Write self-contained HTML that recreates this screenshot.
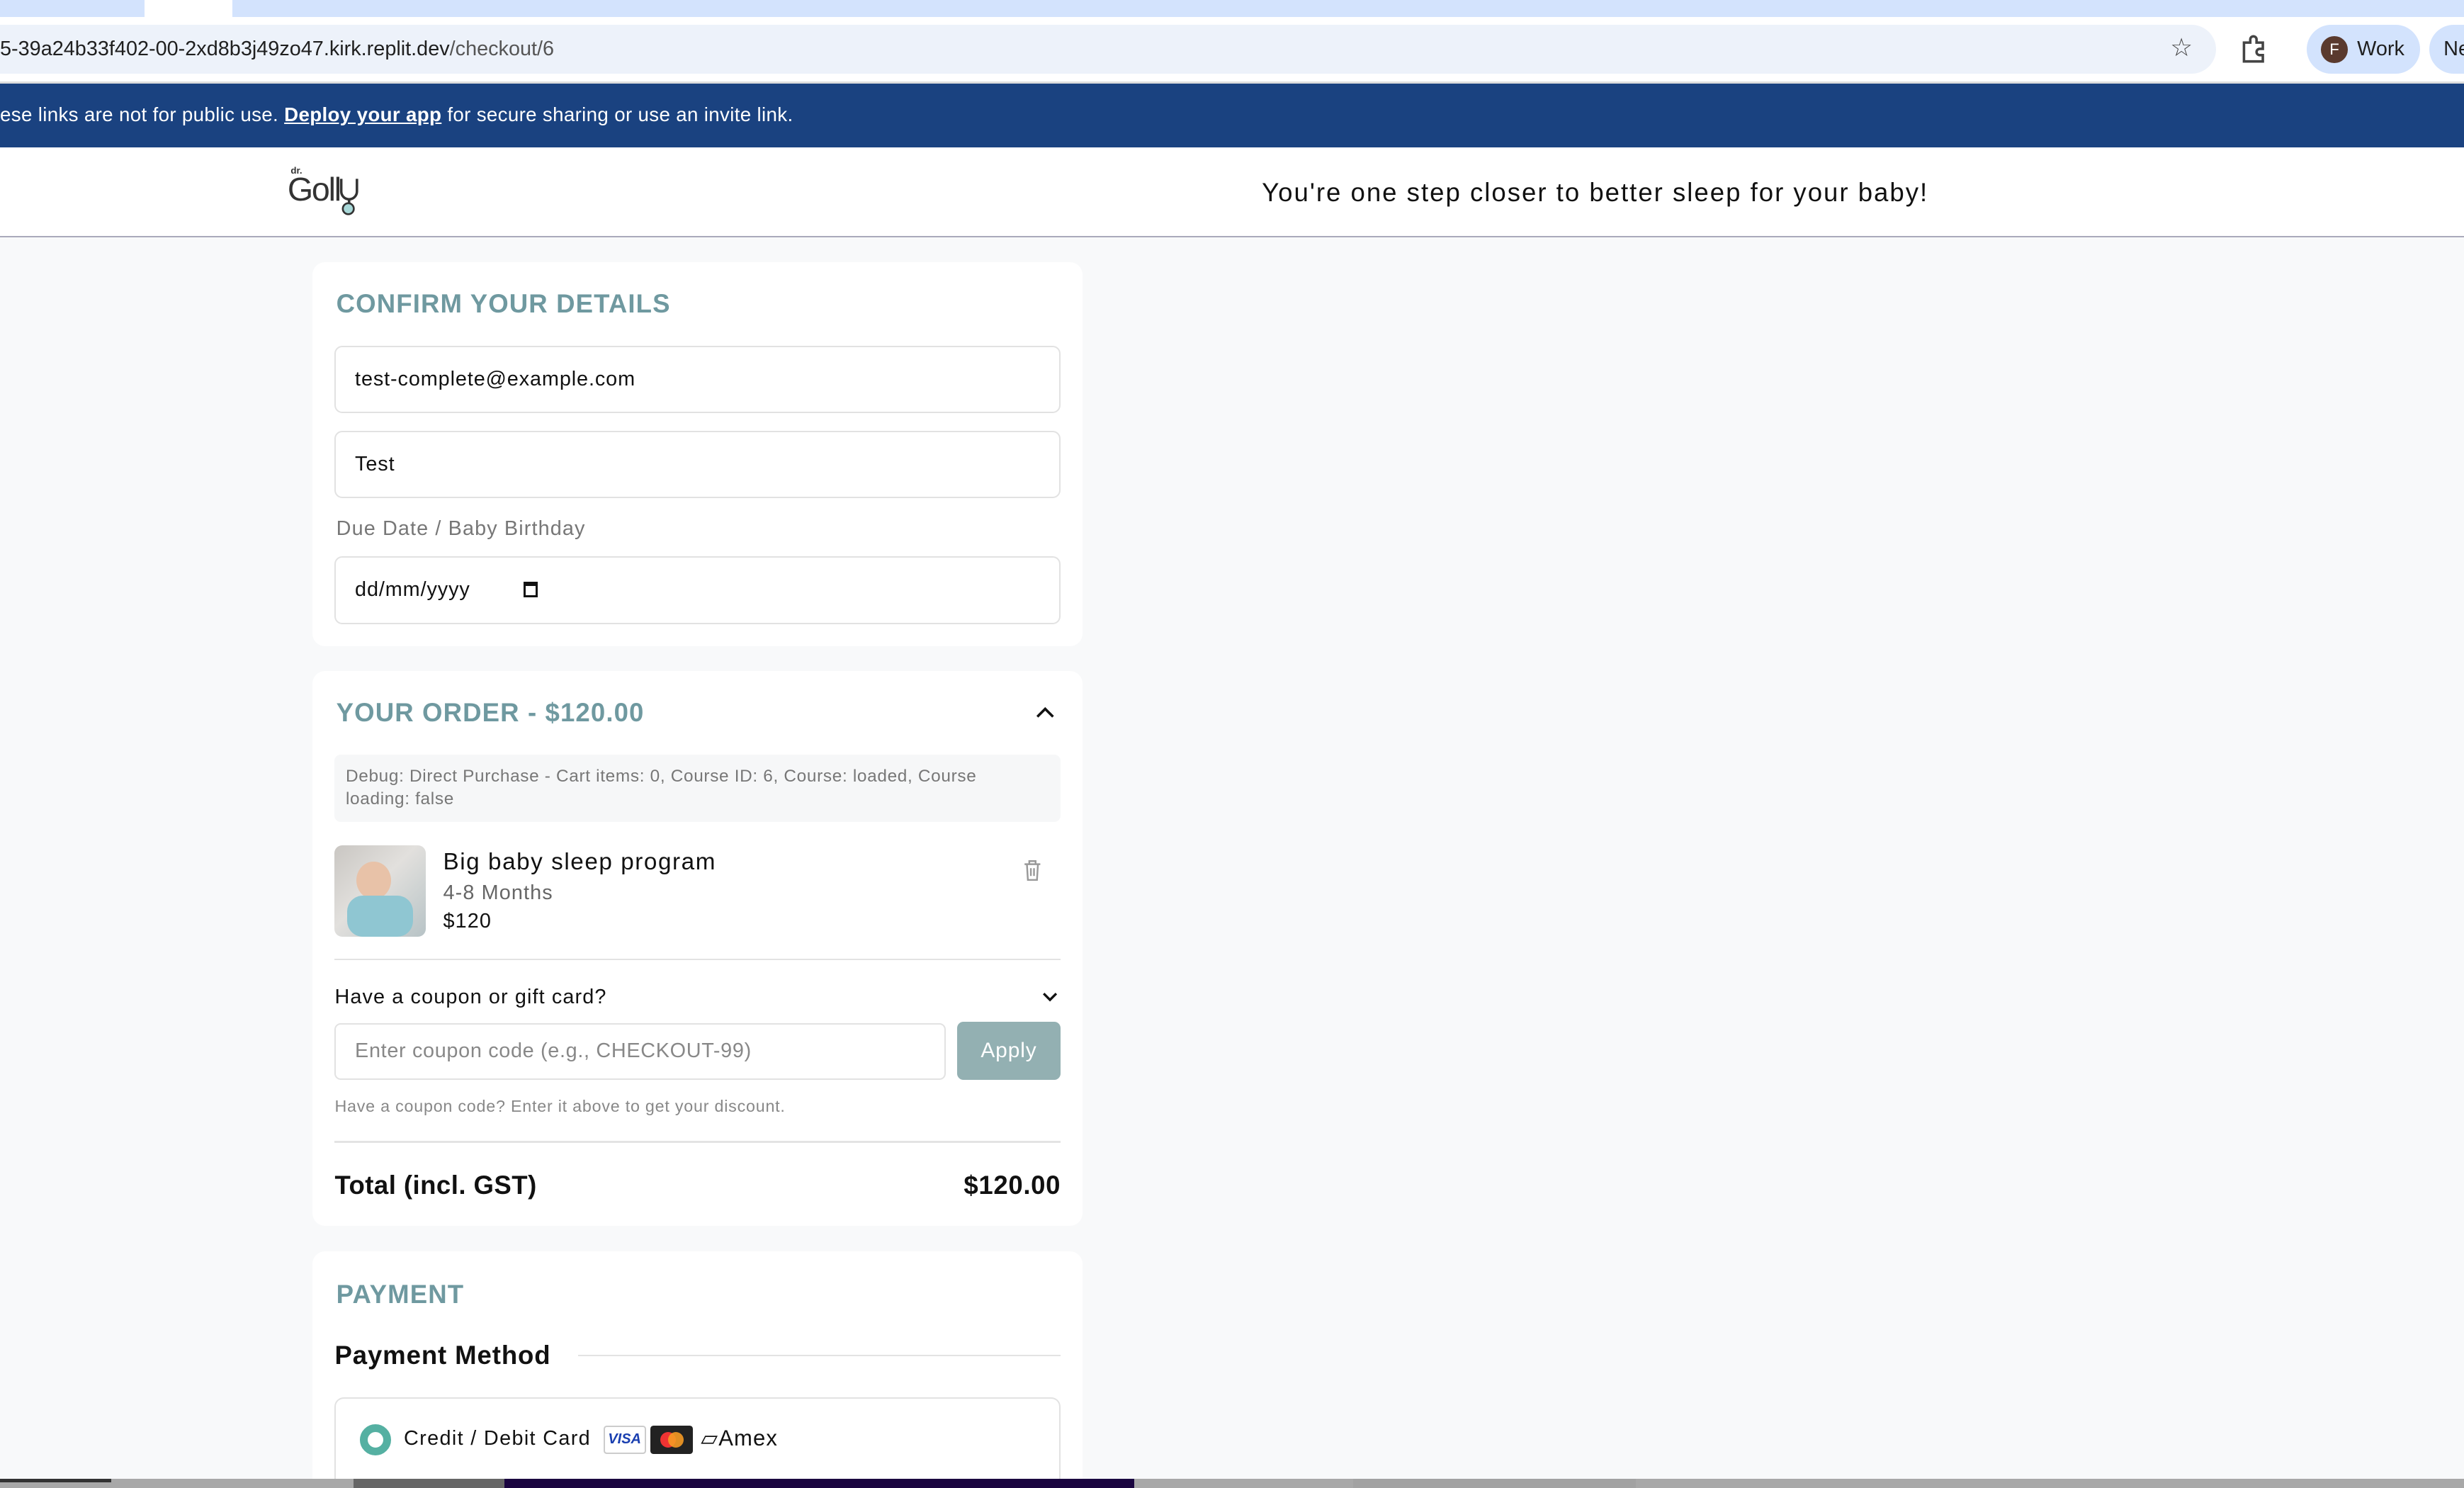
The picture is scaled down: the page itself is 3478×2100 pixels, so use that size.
<!DOCTYPE html>
<html><head><meta charset="utf-8"><style>
*{box-sizing:border-box;margin:0;padding:0}
html,body{width:3478px;height:2100px;overflow:hidden;background:#f8f9fa}
#w{zoom:2.2181;width:1568px;height:947px;overflow:hidden;position:relative;font-family:"Liberation Sans",sans-serif;color:#111}
.a{position:absolute}
.card{position:absolute;left:199px;width:490px;background:#fff;border-radius:8px}
.m{letter-spacing:.5px}
.h{position:absolute;left:15px;color:#6f99a0;font-weight:bold;font-size:16.5px;letter-spacing:.5px}
.inp{position:absolute;left:14px;width:462px;height:43px;border:1px solid #e2e2e2;border-radius:5px;font-size:13px;padding-left:12px;line-height:41px;color:#111;letter-spacing:.4px}
.line{position:absolute;left:14px;width:462px;height:1px;background:#e3e3e3}
</style></head><body><div id="w">
<div class="a" style="left:0;top:0;width:1568px;height:11px;background:#d3e3fd"></div>
<div class="a" style="left:92px;top:0;width:56px;height:11px;background:#fff"></div>
<div class="a" style="left:0;top:11px;width:1568px;height:42px;background:#fff"></div>
<div class="a" style="left:-20px;top:16px;width:1430px;height:31px;background:#edf2fa;border-radius:16px"></div>
<div class="a" style="left:0;top:24px;font-size:13px;color:#1f1f1f">5-39a24b33f402-00-2xd8b3j49zo47.kirk.replit.dev<span style="color:#555">/checkout/6</span></div>
<div class="a" style="left:1381px;top:21px;font-size:16px;color:#444">☆</div>
<svg class="a" style="left:1426px;top:22px" width="17" height="18" viewBox="0 0 17 18"><path d="M2 5h4V3a2 2 0 014 0v2h4v4h-2a2 2 0 000 4h2v4H2z" fill="none" stroke="#444" stroke-width="1.6"/></svg>
<div class="a" style="left:1468px;top:16px;width:72px;height:31px;background:#d3e3fd;border-radius:16px"></div>
<div class="a" style="left:1477px;top:23px;width:17px;height:17px;background:#5a3a2e;border-radius:50%;color:#fff;font-size:10px;text-align:center;line-height:17px">F</div>
<div class="a" style="left:1500px;top:24px;font-size:13px;color:#1f1f1f">Work</div>
<div class="a" style="left:1546px;top:16px;width:40px;height:31px;background:#d3e3fd;border-radius:16px"></div>
<div class="a" style="left:1555px;top:24px;font-size:13px;color:#1f1f1f">Ne</div>
<div class="a" style="left:0;top:52px;width:1568px;height:1px;background:#ddd"></div>
<div class="a" style="left:0;top:53px;width:1568px;height:41px;background:#1a4280"></div>
<div class="a" style="left:0;top:66px;font-size:12.5px;color:#fff;letter-spacing:.15px">ese links are not for public use. <u style="font-weight:bold">Deploy your app</u> for secure sharing or use an invite link.</div>
<div class="a" style="left:0;top:94px;width:1568px;height:57px;background:#fff;border-bottom:1px solid #aab"></div>
<div class="a" style="left:185px;top:105px;font-size:6px;color:#333;font-weight:bold">dr.</div>
<div class="a" style="left:183px;top:108px;font-size:21px;color:#333;letter-spacing:-1px">Goll</div>
<svg class="a" style="left:214px;top:112px" width="20" height="26" viewBox="0 0 20 26"><path d="M3 2v8a5 5 0 0010 0V2" fill="none" stroke="#333" stroke-width="1.6"/><path d="M8 15v4" stroke="#333" stroke-width="1.6"/><circle cx="7.5" cy="21" r="3.5" fill="#a8d8d8" stroke="#333" stroke-width="1.2"/></svg>
<div class="a" style="left:803px;top:113px;font-size:16.5px;color:#111;letter-spacing:.9px">You're one step closer to better sleep for your baby!</div>

<div class="card" style="top:167px;height:244px">
<div class="h" style="top:17px">CONFIRM YOUR DETAILS</div>
<div class="inp" style="top:53px">test-complete@example.com</div>
<div class="inp" style="top:107px">Test</div>
<div class="a m" style="left:15px;top:162px;font-size:13px;color:#777">Due Date / Baby Birthday</div>
<div class="inp" style="top:187px">dd/mm/yyyy <span style="display:inline-block;width:9px;height:10px;border:1.5px solid #111;border-top-width:3px;margin-left:30px;vertical-align:-1px"></span></div>
</div>

<div class="card" style="top:427px;height:353px">
<div class="h" style="top:17px">YOUR ORDER - $120.00</div>
<svg class="a" style="left:460px;top:22px" width="12" height="8"><path d="M1 7l5-5 5 5" fill="none" stroke="#111" stroke-width="1.6"/></svg>
<div class="a" style="left:14px;top:53px;width:462px;height:43px;background:#f6f7f8;border-radius:4px;padding:7px 50px 7px 7px;font-size:11px;color:#777;line-height:14.5px;letter-spacing:.3px">Debug: Direct Purchase - Cart items: 0, Course ID: 6, Course: loaded, Course loading: false</div>
<div class="a" style="left:14px;top:111px;width:58px;height:58px;border-radius:5px;background:linear-gradient(135deg,#c9c6c2,#e2e0dd 45%,#b7c3c6);overflow:hidden"><div style="position:absolute;left:14px;top:10px;width:22px;height:24px;border-radius:50%;background:#e8c2a8"></div><div style="position:absolute;left:8px;top:32px;width:42px;height:26px;border-radius:10px;background:#8fc6d2"></div></div>
<div class="a m" style="left:83px;top:113px;font-size:15px;color:#111;letter-spacing:.7px">Big baby sleep program</div>
<div class="a m" style="left:83px;top:134px;font-size:13px;color:#666">4-8 Months</div>
<div class="a m" style="left:83px;top:152px;font-size:13px;color:#111">$120</div>
<svg class="a" style="left:452px;top:120px" width="12" height="14"><path d="M1 3h10M4 3V1h4v2M2.5 3l.6 10h5.8l.6-10M5 5.5v5M7 5.5v5" fill="none" stroke="#999" stroke-width="1.1"/></svg>
<div class="line" style="top:183px"></div>
<div class="a m" style="left:14px;top:200px;font-size:13px;color:#111">Have a coupon or gift card?</div>
<svg class="a" style="left:464px;top:204px" width="10" height="7"><path d="M1 1l4 4 4-4" fill="none" stroke="#111" stroke-width="1.5"/></svg>
<div class="a m" style="left:14px;top:224px;width:389px;height:36px;border:1px solid #e2e2e2;border-radius:4px;padding-left:12px;line-height:34px;font-size:13px;color:#888;letter-spacing:.3px">Enter coupon code (e.g., CHECKOUT-99)</div>
<div class="a" style="left:410px;top:223px;width:66px;height:37px;background:#93b0b2;border-radius:4px;color:#fff;font-size:13.5px;text-align:center;line-height:37px;letter-spacing:.4px">Apply</div>
<div class="a" style="left:14px;top:271px;font-size:10.5px;color:#888;letter-spacing:.35px">Have a coupon code? Enter it above to get your discount.</div>
<div class="line" style="top:299px"></div>
<div class="a" style="left:14px;top:318px;font-size:16.5px;font-weight:bold;color:#111;letter-spacing:.2px">Total (incl. GST)</div>
<div class="a" style="right:14px;top:318px;font-size:16.5px;font-weight:bold;color:#111;letter-spacing:.3px">$120.00</div>
</div>

<div class="card" style="top:796px;height:200px">
<div class="h" style="top:18px">PAYMENT</div>
<div class="a" style="left:14px;top:57px;font-size:16.5px;font-weight:bold;color:#111;letter-spacing:.4px">Payment Method</div>
<div class="line" style="top:66px;left:169px;width:307px"></div>
<div class="a" style="left:14px;top:93px;width:462px;height:80px;border:1px solid #e2e2e2;border-radius:6px"></div>
<div class="a" style="left:30px;top:110px;width:20px;height:20px;border-radius:50%;border:5px solid #55b0a2;background:#fff"></div>
<div class="a" style="left:58px;top:112px;font-size:13px;color:#111;letter-spacing:.6px">Credit / Debit Card</div>
<div class="a" style="left:185px;top:111px;width:27px;height:18px;border:1px solid #ccc;border-radius:2px;font-size:9px;font-weight:bold;font-style:italic;color:#1a3fb0;text-align:center;line-height:16px">VISA</div>
<div class="a" style="left:215px;top:111px;width:27px;height:18px;background:#222;border-radius:2px"><div style="position:absolute;left:6px;top:4px;width:10px;height:10px;border-radius:50%;background:#e33"></div><div style="position:absolute;left:11px;top:4px;width:10px;height:10px;border-radius:50%;background:#f59a23;opacity:.9"></div></div>
<div class="a" style="left:247px;top:111px;font-size:14px;color:#111;letter-spacing:.5px">▱Amex</div>
</div>

<div class="a" style="left:0;top:941px;width:1568px;height:6px;background:#a8a8a8"></div>
<div class="a" style="left:0;top:941px;width:71px;height:2px;background:#333"></div>
<div class="a" style="left:225px;top:941px;width:96px;height:6px;background:#666"></div>
<div class="a" style="left:321px;top:941px;width:401px;height:6px;background:#1a0540"></div>
<div class="a" style="left:861px;top:941px;width:180px;height:6px;background:#a2a2a2"></div>
</div></body></html>
